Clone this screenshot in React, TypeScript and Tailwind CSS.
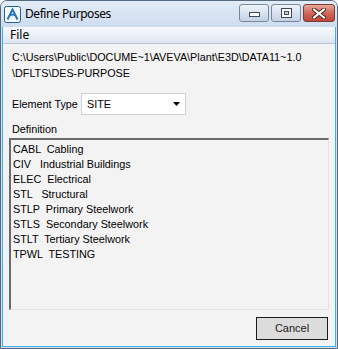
import React from 'react';

const purposes: { code: string; label: string }[] = [
  { code: 'CABL  ', label: 'Cabling' },
  { code: 'CIV   ', label: 'Industrial Buildings' },
  { code: 'ELEC  ', label: 'Electrical' },
  { code: 'STL   ', label: 'Structural' },
  { code: 'STLP  ', label: 'Primary Steelwork' },
  { code: 'STLS  ', label: 'Secondary Steelwork' },
  { code: 'STLT  ', label: 'Tertiary Steelwork' },
  { code: 'TPWL  ', label: 'TESTING' },
];

// small AVEVA style "A" mark in the title bar
const AppIcon = () => (
  <svg width="17" height="17" viewBox="0 0 17 17">
    <rect x="0.5" y="0.5" width="16" height="16" rx="2" fill="#f4f8fc" stroke="#2a5f95" />
    <path d="M3.5 13.5 L8.5 3.5 L13.5 13.5" fill="none" stroke="#2a74b8" strokeWidth="2" />
    <path d="M5.5 9.5 Q8.5 7.5 12 10" fill="none" stroke="#2a74b8" strokeWidth="1.6" />
  </svg>
);

const CaptionButton = ({ kind }: { kind: 'min' | 'max' | 'close' }) => {
  const isClose = kind === 'close';
  return (
    <div
      className={`h-[18px] rounded-[3px] border flex items-center justify-center ${
        isClose
          ? 'w-[32px] border-[#7b3a33] bg-gradient-to-b from-[#e9a89c] via-[#d0685a] to-[#c0463a]'
          : 'w-[30px] border-[#76889e] bg-gradient-to-b from-[#eef3f9] via-[#d9e3ef] to-[#c4d2e3]'
      }`}
    >
      {kind === 'min' && (
        <svg width="11" height="8" viewBox="0 0 11 8">
          <rect x="0.5" y="3.5" width="10" height="4" fill="#ffffff" stroke="#3b4a5c" />
        </svg>
      )}
      {kind === 'max' && (
        <svg width="11" height="10" viewBox="0 0 11 10">
          <rect x="0.5" y="0.5" width="10" height="9" fill="#ffffff" stroke="#3b4a5c" />
          <rect x="3.5" y="3.5" width="4" height="3" fill="#c9d6e6" stroke="#3b4a5c" />
        </svg>
      )}
      {isClose && (
        <svg width="14" height="11" viewBox="0 0 14 11">
          <path d="M2 1.5 L12 9.5 M12 1.5 L2 9.5" stroke="#4a2520" strokeWidth="4" strokeLinecap="square" />
          <path d="M2 1.5 L12 9.5 M12 1.5 L2 9.5" stroke="#ffffff" strokeWidth="2" strokeLinecap="square" />
        </svg>
      )}
    </div>
  );
};

export default function App() {
  return (
    <div className="w-[338px] h-[349px] flex flex-col bg-[#d2e1f1] border border-[#55697f] rounded-t-[7px] overflow-hidden font-['Liberation_Sans',Arial,sans-serif] text-[10.8px] text-black">
      {/* Title bar */}
      <div className="h-[26px] shrink-0 flex items-start pl-[3px] pr-[2px] bg-gradient-to-b from-[#e2ecf7] to-[#cddcee]">
        <div className="mt-[5px]">
          <AppIcon />
        </div>
        <span className="ml-[4px] mt-[5px] font-['Noto_Sans',sans-serif] text-[12px] tracking-[-0.45px] leading-[16px] text-black">
          Define Purposes
        </span>
        <div className="ml-auto mt-[3px] flex gap-[2px]">
          <CaptionButton kind="min" />
          <CaptionButton kind="max" />
          <CaptionButton kind="close" />
        </div>
      </div>

      {/* Client area */}
      <div className="flex-1 flex flex-col mx-px mb-px border-x border-b border-[#3db2ea] bg-[#f3f3f3]">
        {/* Menu bar */}
        <div className="h-[17px] shrink-0 flex items-center pl-[7px] border-b border-[#b9c6d8] bg-gradient-to-b from-[#f7f9fd] to-[#dfe6f2]">
          <span className="font-['Noto_Sans',sans-serif] text-[12px] leading-[16px]">File</span>
        </div>

        <div className="flex-1 flex flex-col px-[6px] pt-[5px] pb-[6px]">
          <div className="pl-[3px] leading-[16px]">
            <div>C:\Users\Public\DOCUME~1\AVEVA\Plant\E3D\DATA11~1.0</div>
            <div>\DFLTS\DES-PURPOSE</div>
          </div>

          <div className="mt-[12px] flex items-center pl-[3px]">
            <span className="w-[69px]">Element Type</span>
            <div className="w-[105px] h-[22px] flex items-center justify-between pl-[5px] pr-[5px] bg-white border border-[#d0d0d0]">
              <span>SITE</span>
              <svg width="7" height="4" viewBox="0 0 7 4">
                <path d="M0 0 H7 L3.5 4 Z" fill="#000000" />
              </svg>
            </div>
          </div>

          <div className="mt-[7px] pl-[3px] leading-[14px]">Definition</div>

          <div className="mt-[2px] h-[172px] bg-[#f3f3f3] border-l-2 border-t-2 border-l-[#6a6a6a] border-t-[#6a6a6a] border-r border-b border-r-[#e4e4e4] border-b-[#e4e4e4] pl-[2px] pt-[2px]">
            {purposes.map((p) => (
              <div key={p.code} className="leading-[15px] whitespace-pre">
                {p.code}
                {p.label}
              </div>
            ))}
          </div>

          <div className="mt-[7px] flex justify-end pr-px">
            <button className="w-[72px] h-[23px] border border-[#1c1c1c] bg-[#dcdcdc] text-[11px] leading-none text-[#1a1a1a]">
              Cancel
            </button>
          </div>
        </div>
      </div>
    </div>
  );
}
